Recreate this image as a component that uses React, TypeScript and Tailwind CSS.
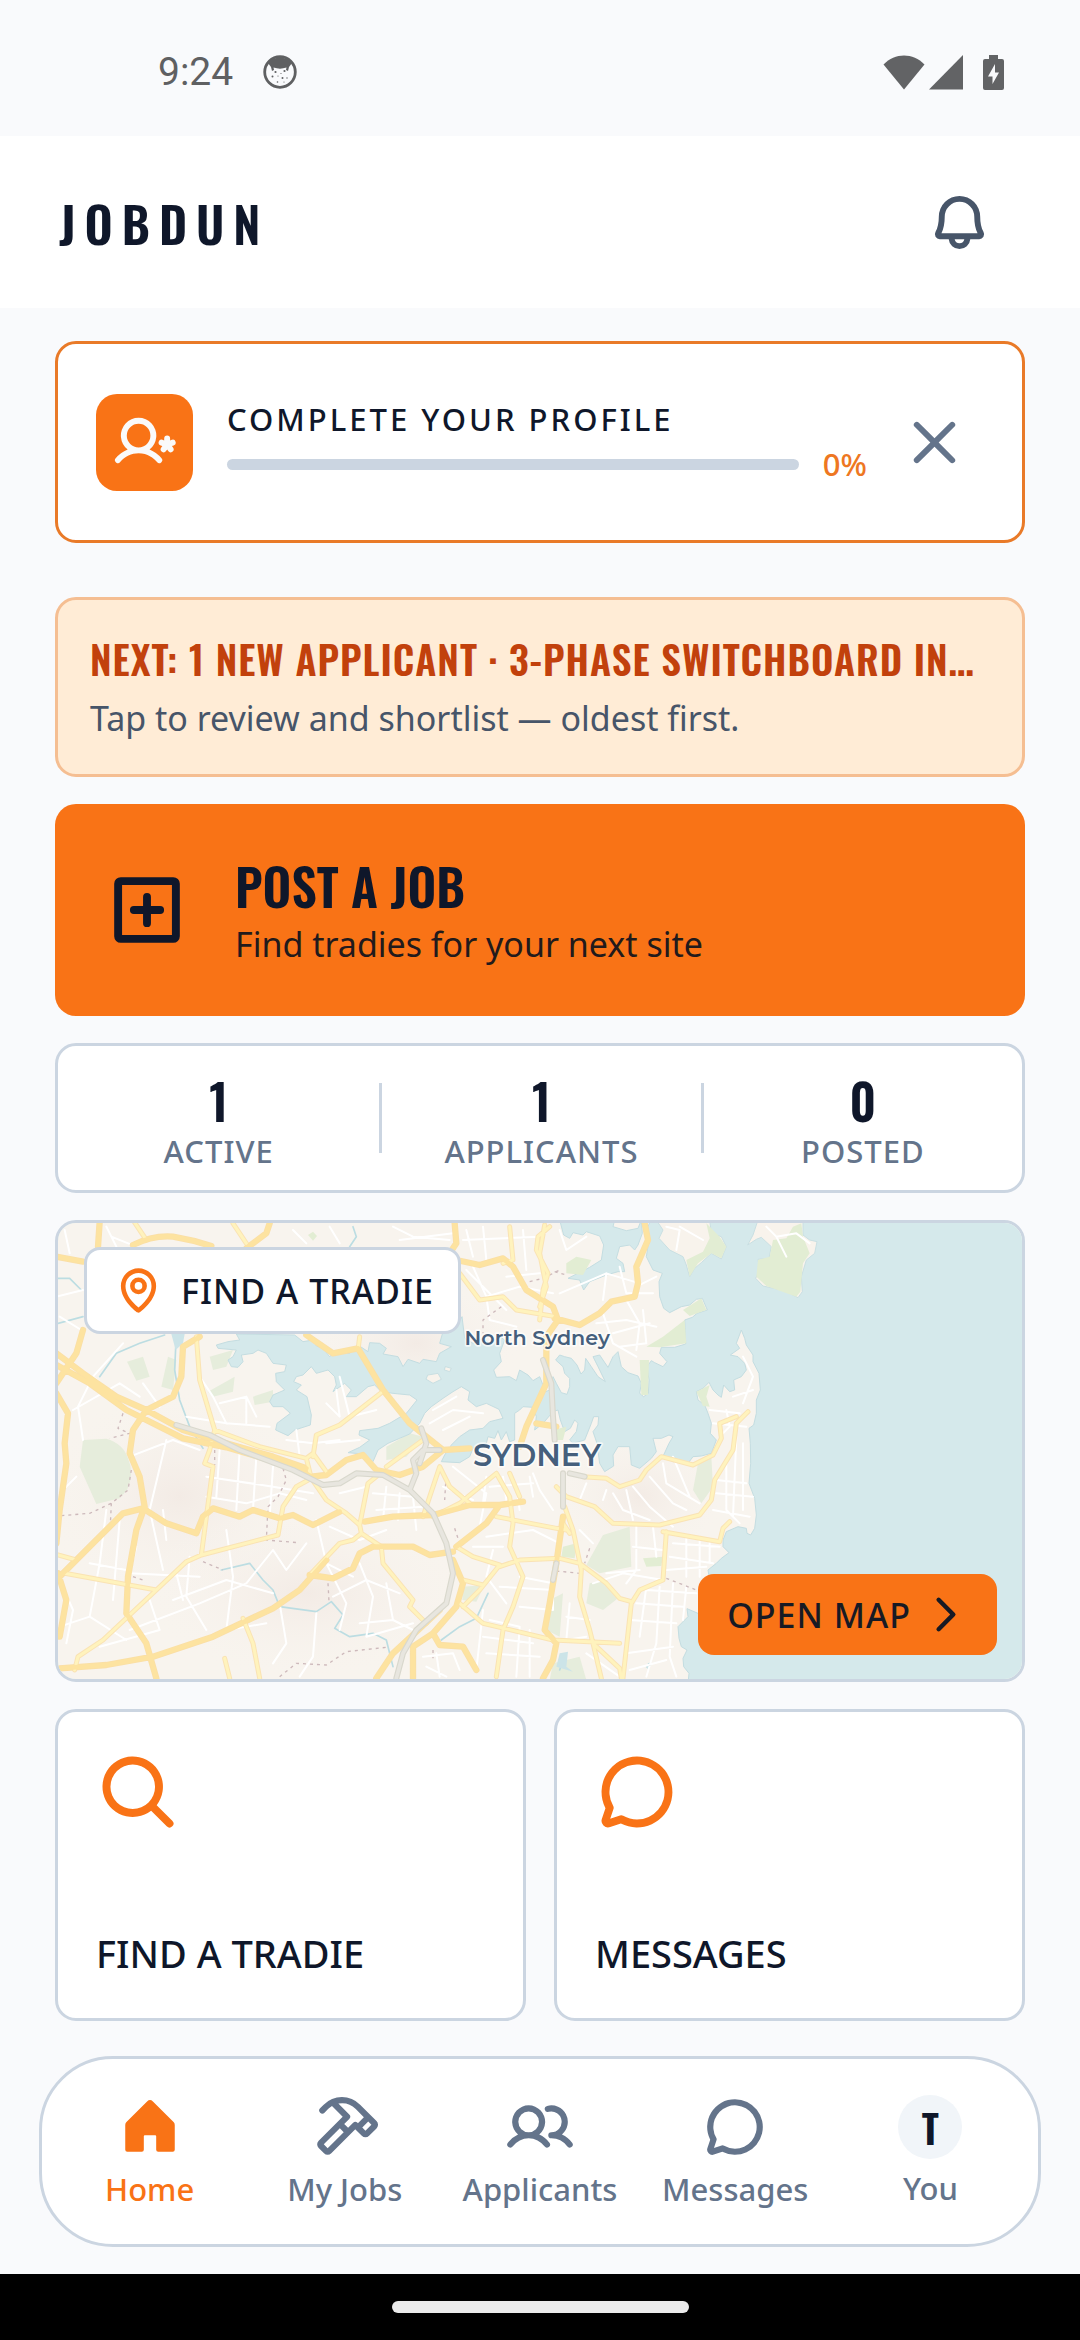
import type { ReactNode } from "react";
import {
  PiBellBold,
  PiCaretRightBold,
  PiChatCircleBold,
  PiHammerBold,
  PiHouseFill,
  PiMagnifyingGlassBold,
  PiMapPinBold,
  PiPlusSquareBold,
  PiUserGearBold,
  PiUsersBold,
  PiXBold,
} from "react-icons/pi";

const DISPLAY = "font-['Oswald','Roboto_Condensed','Liberation_Sans',sans-serif]";

function StatusBar() {
  return (
    <div className="flex h-[136px] items-center justify-between bg-[#f9fafc] pr-[76px] pl-[158px] pt-2 text-[#5f6062]">
      <div className="flex items-center gap-[30px]">
        <span className="font-['Roboto',sans-serif] text-[39px] leading-[48px]">9:24</span>
        <svg viewBox="0 0 34 34" className="size-[34px]" aria-hidden="true">
          <circle cx="17" cy="17" r="15.3" fill="none" stroke="currentColor" strokeWidth="2.8" />
          <path
            d="M5 8C10 1 24 1 29 8L26 12L25 16L23 15L23.500 12.500C19 14 15 14 10.500 12.500L11 15L9 16L8 12Z"
            fill="currentColor"
          />
          <g fill="currentColor">
            <circle cx="12.500" cy="17" r="1.100" />
            <circle cx="21.500" cy="16" r="1.100" />
            <circle cx="9.500" cy="21.500" r="1" />
            <circle cx="19.500" cy="23" r="1" />
            <circle cx="14.500" cy="27" r="0.800" />
            <circle cx="24" cy="23" r="0.700" />
            <circle cx="15" cy="21" r="0.600" />
            <circle cx="18" cy="18.500" r="0.600" />
            <circle cx="21" cy="27" r="0.600" />
          </g>
        </svg>
      </div>
      <div className="flex items-center text-[#626365]">
        <svg viewBox="0 0 42 35" className="h-[35px] w-[42px]" aria-hidden="true">
          <path d="M0.500 9.500C12 -2.500 30 -2.500 41.500 9.500L21 34.500Z" fill="currentColor" />
        </svg>
        <svg viewBox="0 0 34 35" className="ml-1 h-[35px] w-[34px]" aria-hidden="true">
          <path d="M34 0V34.500H0Z" fill="currentColor" />
        </svg>
        <svg viewBox="0 0 21 35" className="ml-5 h-[35px] w-[21px]" aria-hidden="true">
          <path
            fillRule="evenodd"
            d="M6 0H15V4H19Q21 4 21 6V33Q21 35 19 35H2Q0 35 0 33V6Q0 4 2 4H6ZM12 9L5 21.500H9.500V29L16 17.500H12Z"
            fill="currentColor"
          />
        </svg>
      </div>
    </div>
  );
}

function Header() {
  return (
    <header className="flex h-[172px] items-center justify-between bg-white pr-[89px] pl-[59px]">
      <h1 className={`${DISPLAY} pt-0.5 text-[49px] leading-[72px] font-semibold tracking-[9px] text-[#0f172a]`}>JOBDUN</h1>
      <button type="button" aria-label="Notifications" className="text-[#475569]">
        <PiBellBold className="size-[63px]" />
      </button>
    </header>
  );
}

function ProfileCard() {
  return (
    <section className="flex h-[202px] items-center rounded-[21px] border-[3px] border-[#e97a28] bg-white pr-14 pl-[38px]">
      <div className="flex size-[97px] shrink-0 items-center justify-center rounded-[21px] bg-[#f97316] text-[#fafafa]">
        <PiUserGearBold className="size-[63px]" />
      </div>
      <div className="ml-[34px] flex min-w-0 flex-1 flex-col pt-0.5">
        <span id="profile-label" className="text-[31px] leading-[42px] font-medium tracking-[3px] text-[#0f172a]">
          COMPLETE YOUR PROFILE
        </span>
        <div className="flex items-center gap-6">
          <div
            role="progressbar"
            aria-labelledby="profile-label"
            aria-valuenow={0}
            aria-valuemin={0}
            aria-valuemax={100}
            className="h-[11px] flex-1 rounded-full bg-[#cbd5e1]"
          />
          <span className="text-[31px] leading-[48px] font-medium text-[#ee7722]">0%</span>
        </div>
      </div>
      <button type="button" aria-label="Dismiss" className="ml-9 text-[#64748b]">
        <PiXBold className="size-[63px]" />
      </button>
    </section>
  );
}

function NextCard() {
  return (
    <button
      type="button"
      className="mt-[54px] flex h-[180px] flex-col justify-center rounded-[21px] border-[3px] border-[#f5be92] bg-[#ffecd6] px-8 text-left"
    >
      <span className={`${DISPLAY} whitespace-nowrap text-[39px] leading-[54px] font-semibold tracking-[1px] text-[#c2410c]`}>
        NEXT: 1 NEW APPLICANT · 3-PHASE SWITCHBOARD IN…
      </span>
      <span className="mt-2 text-[34px] leading-[50px] text-[#475569]">Tap to review and shortlist — oldest first.</span>
    </button>
  );
}

function PostJob() {
  return (
    <button
      type="button"
      className="mt-[27px] flex h-[212px] items-center gap-[46px] rounded-[21px] bg-[#f97316] px-[50px] text-left text-[#0f172a]"
    >
      <PiPlusSquareBold className="size-[84px]" />
      <span className="flex flex-col">
        <span className={`${DISPLAY} text-[50px] leading-[68px] font-semibold`}>POST A JOB</span>
        <span className="text-[34px] leading-[50px] text-[#221a1c]">Find tradies for your next site</span>
      </span>
    </button>
  );
}

const STATS = [
  { value: "1", label: "ACTIVE" },
  { value: "1", label: "APPLICANTS" },
  { value: "0", label: "POSTED" },
];

function Stats() {
  return (
    <section className="mt-[27px] flex h-[150px] items-center rounded-[21px] border-[3px] border-[#cbd5e1] bg-white">
      {STATS.map((s, i) => (
        <div key={s.label} className="flex flex-1 items-center">
          {i > 0 && <div className="h-[70px] w-[3px] bg-[#cbd5e1]" />}
          <div className="flex flex-1 flex-col items-center pt-2">
            <span className={`${DISPLAY} text-[49px] leading-[58px] font-semibold text-[#0f172a]`}>{s.value}</span>
            <span className="text-[31px] leading-[44px] font-medium tracking-[1px] text-[#64748b]">{s.label}</span>
          </div>
        </div>
      ))}
    </section>
  );
}

const PARKS = [
  "M130 690L200 686Q250 700 265 745Q285 790 262 840L240 865L170 882L120 770Z",
  "M262 455L310 440L330 500L290 512Z",
  "M505 545L585 500L580 545L520 560Z",
  "M510 440L580 420L560 470L520 480Z",
  "M385 440L410 450L400 540L365 530Z",
  "M640 560L700 540L700 575L645 585Z",
  "M1040 710L1110 670L1150 680L1100 740L1040 750Z",
  "M1270 1130L1335 1125L1310 1175L1268 1170Z",
  "M1690 975L1770 950L1775 1070L1680 1090L1640 1065Z",
  "M1650 1120L1700 1110L1735 1165L1690 1200L1640 1180Z",
  "M1975 760L2015 740L2020 830L1985 880L1960 840Z",
  "M1530 1170L1570 1150L1560 1280L1520 1260Z",
  "M1540 1360L1620 1340L1640 1410L1530 1410Z",
  "M2000 40L2040 80L2060 110L2045 145L2015 130L1975 160L1950 200L1940 150L1990 125L2010 85Z",
  "M2200 90L2240 85L2260 50L2285 40L2290 80L2310 130L2290 160L2282 245L2270 260L2180 228L2150 200L2155 150L2190 140Z",
  "M1820 410L1870 380L1935 330L1940 400L1860 412Z",
  "M1930 300L1985 265L2000 300L1950 318Z",
  "M1800 450L1828 450L1825 555L1805 555Z",
  "M1970 545L2010 525L2000 560L2010 590L1990 588Z",
  "M1580 160L1610 140L1655 150L1630 195L1580 190Z",
  "M1540 660L1580 650L1570 690L1550 690Z",
  "M1570 1010L1610 1000L1605 1045L1565 1040Z",
  "M1810 1045L1870 1040L1865 1068L1820 1070Z",
  "M805 75L820 65L832 78L820 92Z",
];

const STREETS = [
  "M50 260L130 240M75 60L90 130M200 50L230 110M215 80L290 110M60 320L125 360",
  "M100 600L240 520L300 560M130 690L115 590L160 500L250 400M160 500L230 560M310 520L360 590",
  "M270 740L400 690L480 720M380 690L330 900L370 1080M200 900L180 1060L150 1220L60 1250M240 930L220 1170M150 1060L260 1080",
  "M150 1220L260 1290M330 1170L360 1260L180 1310M450 1040L440 1160L500 1260M400 1170L560 1110L700 1150M270 1260L480 1180L620 1120",
  "M560 960L580 1100L560 1260L680 1240M500 860L620 880L720 850L800 870M540 720L530 860M600 720L590 900M650 740L640 900M700 770L690 920",
  "M500 800L700 830L820 850M540 580L620 560L620 640M480 500L520 560L560 640M440 620L560 640L690 650M620 560L650 620",
  "M740 690L820 700L900 690M770 660L780 740M860 580L900 620L890 540M860 700L960 690M900 500L930 620L1010 600",
  "M720 1180L740 1300L700 1360M830 1210L820 1340L780 1400M620 1120L700 1020L740 1080L800 1000M860 1060L920 1180L900 1260",
  "M880 1160L980 1110L1080 1150M960 1060L1000 1160L980 1280L1120 1240M830 930L860 1060L940 1100M870 950L960 990L1040 960",
  "M1000 850L1120 860L1130 960M900 850L980 830M1040 830L1030 930M1080 850L1075 930M1010 900L1150 890",
  "M1170 640L1240 600L1330 610M1180 600L1250 560M1210 660L1290 620M1210 830L1300 870M1240 770L1340 850L1320 950",
  "M1060 50L1120 80L1230 90M760 60L800 100M870 50L900 100M1080 90L1240 70M1280 60L1300 140M1330 50L1340 150M1270 90L1500 80",
  "M1300 170L1340 260L1440 230L1540 250M1400 200L1500 190M1450 60L1460 180M1280 180L1400 300M1340 260L1350 330L1430 350",
  "M1560 60L1580 120L1640 80M1560 250L1700 190L1800 220M1700 190L1690 270M1740 170L1760 250L1840 250M1670 340L1760 330L1850 350",
  "M1690 310L1720 400L1790 440M1760 270L1800 340L1790 420M1850 200L1790 230M1720 370L1830 340M1810 300L1820 400L1740 410",
  "M1880 50L1920 60L1910 120M1920 50L1990 90M2180 50L2210 80L2270 70L2310 100M2210 80L2240 140",
  "M2110 440L2140 500L2110 580M2080 560L2140 540M2060 600L2070 650L2040 680M2010 600L2100 610M2020 640L2120 650",
  "M2060 760L2060 900L2100 940M2090 680L2080 920M2110 700L2110 900M2030 850L2140 860M2030 810L2120 820M2020 900L2130 920",
  "M1720 850L1750 900L1830 930M1780 830L1830 890L1900 950M1830 800L1900 880L1940 900M1870 760L1880 820L1980 880M1900 740L1950 860",
  "M1700 840L1690 870M1760 840L1780 930M1640 820L1620 870M1790 950L1790 1080L1760 1120M1840 950L1850 1040M1780 1010L1870 1020",
  "M1900 1000L2040 1010M1890 1040L2020 1060M1880 1080L2000 1070M1940 980L1940 1100M1980 980L1980 1100M2010 990L2010 1060",
  "M1660 1120L1750 1090L1870 1110M1700 1090L1800 1080M1820 1140L1970 1150M1790 1180L1930 1190M1770 1230L1910 1240M1820 1130L1800 1280",
  "M1860 1130L1850 1300L1820 1400M1900 1120L1890 1340L1910 1400M1940 1130L1930 1230M1580 1220L1650 1230M1590 1180L1580 1290L1640 1280",
  "M1760 1330L1900 1310M1770 1380L1880 1350M1640 1330L1740 1400M1660 1000L1620 960M1540 900L1500 840L1480 790",
  "M1340 980L1480 960L1560 1000M1360 1020L1340 1100L1400 1180M1300 1010L1390 1010M1440 1100L1540 1120L1540 1200L1440 1190",
  "M1330 1200L1310 1380M1350 1230L1440 1250L1430 1400M1470 1260L1470 1400M1340 1330L1500 1340M1380 1130L1540 1140M1330 1280L1480 1300",
  "M1150 1340L1240 1330L1260 1380M1160 1370L1220 1400M1190 1330L1200 1400M1120 1260L1060 1230L1040 1120M1060 1230L960 1240",
  "M1340 800L1330 880M1390 800L1400 870M1430 830L1440 900M1470 800L1480 860M1350 830L1480 820",
  "M60 1110L100 1200L80 1300M60 850L110 800M290 1010L270 1090L480 1100M370 900L380 990M410 1090L430 1170",
];

const MINOR_ROADS = [
  "M280 30L320 90M580 40L620 100M470 380L480 510L525 660L510 720L495 760L520 770L485 1035",
  "M55 1035L110 1050M75 1090L350 1140L440 1055L485 1035L715 975L730 890L770 830L815 805",
  "M350 1140L270 1215L190 1290L115 1340L105 1380M610 1225L640 1300L660 1405M555 1345L570 1405",
  "M525 660L660 710L800 745L820 730L860 785M820 740L830 675L900 645L1025 548M800 745L815 805L860 870L920 910L960 945",
  "M960 945L975 870L985 820L1010 800M960 945L965 970L1025 1010L1030 1060L1120 1170L1110 1190L1160 1240M965 970L940 990L900 1000L810 1095",
  "M1150 920L1200 770L1230 830L1290 880M1180 920L1260 880L1370 790M960 380L955 420M1260 190L1320 270L1390 260L1430 300L1550 320",
  "M1040 770L1150 690M1250 1010L1300 1040L1380 1065L1320 1140L1270 1190M1270 1110L1330 1125M1260 1180L1330 1240L1540 1290L1740 1300",
  "M1390 1260L1370 1400M1370 920L1550 955L1580 960M1380 1070L1440 1050L1560 1045L1620 1060L1700 1120L1740 1165L1775 1175",
  "M1410 50L1420 150L1390 160M1530 50L1495 80L1490 120L1525 190L1510 240L1500 330M1370 790L1410 860L1420 940L1410 1010L1450 1100L1420 1190L1390 1260",
  "M1410 790L1440 860M1550 830L1580 860L1665 890L1720 940L1860 945L1980 915L2015 870L2025 810L2080 720L2090 640L2125 605",
  "M1630 800L1700 805L1740 830L1800 810L1820 780L1865 740L1960 765L2020 735L2045 685L2040 640L2090 620",
  "M1870 965L2040 995L2050 955L2070 935M1880 965L1870 1110L1800 1140L1775 1180L1750 1405",
  "M1575 890L1600 960L1625 1080L1620 1160L1650 1260L1660 1300L1685 1405M1660 1300L1740 1375L1745 1405M1590 970L1570 940",
  "M1515 45L1500 130L1520 230L1500 290",
];

const MAJOR_ROADS = [
  "M50 140L130 155M180 35L175 110M280 105Q340 75 400 80Q460 90 515 108M690 40L680 70L620 115",
  "M50 430L130 490L230 560L320 600L430 660L560 700L700 740L800 775M50 465L150 520L260 600L430 685L560 712L760 770L815 800",
  "M480 380L430 410L425 500L400 560L320 600L280 660L270 730L300 800L315 890L290 960L265 1100L260 1210L320 1300L350 1405",
  "M130 360L110 430L50 520M50 550L85 610L75 700L80 760L60 900L50 1000M60 1100L160 1000L250 910L310 895L380 940L470 970L490 920L520 895L600 920L640 900L720 925L760 915L820 945L900 905",
  "M60 1375L200 1365L340 1340L520 1280L700 1195L780 1140L860 1050M55 1090L80 1170L60 1280",
  "M800 375L880 430L955 415L1030 540L1110 640L1210 720L1290 715M815 800L860 795L920 750L970 735L1010 780L1080 795L1150 770L1210 720",
  "M975 935L1060 920L1180 915L1290 885L1380 885L1450 875M1380 885L1340 940L1250 1010M810 1095L880 1105L940 1075L960 1030L1000 1010L1120 1010L1170 1035L1240 1025",
  "M1245 40L1250 100L1230 130M1250 150L1320 165L1390 145L1420 170L1460 240L1540 290L1555 330L1520 380L1520 520L1460 650L1440 710",
  "M1545 325L1620 345L1680 310L1715 275L1785 260L1795 220L1790 170L1825 90L1815 40",
  "M1240 1050L1270 1120L1250 1190L1180 1270L1120 1310L1120 1405M1180 1270L1200 1305L1270 1310L1310 1380M1200 1200L1060 1330L1010 1405",
  "M1570 920L1550 1060L1530 1180L1515 1260L1550 1300L1540 1350L1510 1405M1490 640L1550 650",
];

const MOTORWAYS = [
  "M410 645L510 675L600 720L760 780L850 825L900 820L950 790L1030 795L1110 840L1180 910L1220 1000L1240 1090L1220 1180L1130 1260L1090 1330L1070 1405",
  "M1110 840L1130 790L1120 750L1150 720L1200 720M1145 655L1160 700L1140 760M1510 450L1535 520L1540 620L1545 690M1570 790L1570 890M1590 790L1635 800M1550 1060L1540 1110",
];

function HarbourMap() {
  return (
    <svg
      viewBox="55 39 2892 1368"
      preserveAspectRatio="xMidYMid slice"
      className="h-full w-full"
      role="img"
      aria-label="Map of Sydney"
      fill="none"
      strokeLinecap="round"
      strokeLinejoin="round"
    >
      <defs>
        <radialGradient id="suburbs">
          <stop offset="0" stopColor="#f3ebe5" />
          <stop offset="1" stopColor="#f8f4ef" stopOpacity="0" />
        </radialGradient>
      </defs>
      <rect x="40" y="30" width="2920" height="1390" fill="#f8f4ee" />
      <ellipse cx="420" cy="860" rx="420" ry="330" fill="url(#suburbs)" />
      <ellipse cx="800" cy="1150" rx="500" ry="260" fill="url(#suburbs)" />
      <ellipse cx="1130" cy="400" rx="320" ry="200" fill="url(#suburbs)" />
      <ellipse cx="1800" cy="860" rx="260" ry="200" fill="url(#suburbs)" />
      <g fill="#e6eddc">
        {PARKS.slice(0, 13).map((d) => (
          <path key={d} d={d} />
        ))}
      </g>

      {/* Harbour and ocean */}
      <g fill="#d5e9eb" stroke="#c4dde1" strokeWidth="3">
        <path d="M3000 0H1845L1825 50L1828 90L1820 140L1840 180L1868 190L1858 215L1860 260L1872 295L1890 308L1925 290L1950 285L1970 268L1988 265L2003 300L1972 310L1958 322L1935 330L1938 402L1905 412L1865 412L1860 430L1882 455L1870 470L1845 458L1835 452L1822 470L1828 510L1826 550L1812 560L1800 550L1805 520L1795 498L1765 488L1745 470L1735 425L1720 440L1705 472L1690 450L1680 435L1660 440L1675 470L1697 515L1675 500L1655 470L1638 445L1635 480L1624 492L1612 465L1595 445L1575 440L1560 435L1548 450L1570 470L1575 490L1590 505L1590 530L1582 553L1565 548L1550 520L1540 500L1530 540L1518 545L1500 500L1480 512L1465 495L1440 480L1430 512L1410 500L1370 502L1362 480L1385 455L1380 430L1395 390L1380 380L1350 400L1330 385L1300 400L1275 385L1267 320L1250 350L1210 365L1200 400L1235 410L1200 430L1190 455L1150 448L1140 460L1105 448L1090 470L1075 440L1030 432L1040 415L1020 400L990 398L985 425L955 405L930 430L885 425L870 440L850 415L830 408L820 390L790 395L765 375L590 372L600 390L565 395L530 405L535 415L590 420L580 440L565 450L575 470L595 472L610 455L605 435L640 430L655 420L680 430L700 460L740 465L735 485L708 490L710 515L735 540L700 555L690 575L700 590L730 590L752 610L712 640L708 660L745 677L765 660L812 645L815 615L802 560L770 540L785 525L762 515L770 500L790 495L815 470L830 490L865 480L885 500L890 525L880 545L915 520L935 540L920 560L950 560L985 530L1005 525L1025 545L1060 550L1110 555L1132 570L1100 610L1050 640L1015 655L960 662L958 675L990 690L960 712L925 728L970 732L1000 755L1015 720L1045 700L1080 685L1110 672L1140 640L1155 610L1175 590L1210 565L1240 545L1265 530L1290 545L1285 570L1310 590L1340 580L1378 598L1390 625L1350 635L1330 655L1290 660L1260 680L1235 705L1215 735L1205 755L1260 758L1290 740L1300 715L1340 700L1345 680L1365 685L1375 662L1385 690L1400 665L1410 695L1425 690L1425 610L1440 600L1450 590L1480 592L1490 620L1485 660L1510 640L1540 605L1555 600L1562 630L1575 665L1592 655L1605 630L1615 640L1610 665L1590 690L1600 700L1635 690L1655 640L1662 620L1677 620L1675 645L1660 665L1672 700L1680 760L1695 785L1722 768L1720 735L1735 710L1770 710L1775 765L1800 775L1835 745L1850 725L1840 685L1865 685L1888 675L1900 680L1888 700L1872 735L1900 755L1945 760L1960 740L1985 738L2015 730L2030 690L2012 670L2015 640L2005 610L1995 585L1975 570L1970 545L1990 535L2008 517L2020 540L2035 555L2045 562L2052 525L2070 545L2085 540L2082 510L2105 500L2120 480L2115 460L2095 440L2072 435L2100 415L2090 400L2105 360L2115 385L2120 405L2140 435L2140 455L2158 490L2162 540L2150 570L2150 610L2142 645L2128 655L2132 700L2133 760L2128 820L2145 865L2150 915L2145 955L2133 975L2122 970L2120 955L2095 950L2060 965L2050 990L2050 1010L2068 1028L2045 1045L2030 1060L2005 1080L2010 1110L2000 1180L1975 1210L1942 1196L1945 1220L1915 1250L1918 1285L1925 1310L1942 1320L1930 1345L1932 1370L1948 1390L1945 1420H3000Z" />
        <path d="M1560 30L1572 75L1590 85L1600 68L1630 75L1640 65L1680 78L1692 105L1685 150L1650 172L1585 205L1620 210L1632 240L1650 215L1700 195L1735 185L1755 185L1750 160L1730 145L1740 110L1770 105L1785 120L1795 105L1808 70L1805 30L1795 55L1760 62L1720 50L1725 30Z" />
      </g>
      <g fill="#f8f3ec" stroke="#c9dfe2" strokeWidth="3">
        <path d="M1850 30L1870 60L1858 85L1890 120L1930 140L1940 165L1950 200L1965 175L1985 158L2015 130L2045 147L2060 110L2045 80L2015 70L2010 30Z" />
        <path d="M2155 30L2140 75L2124 105L2150 88L2165 82L2195 110L2188 145L2155 148L2160 180L2148 205L2170 228L2235 242L2275 263L2288 245L2285 200L2300 150L2325 130L2332 95L2310 90L2290 75L2290 30Z" />
        <path d="M1165 495L1195 490L1205 508L1180 520L1160 508Z" />
        <path d="M1218 470L1235 475L1230 485L1215 480Z" />
      </g>
      <g fill="#e2edd3">
        {PARKS.slice(13).map((d) => (
          <path key={d} d={d} />
        ))}
      </g>

      {/* Creeks */}
      <g stroke="#bcdde2" strokeWidth="5">
        <path d="M50 205L90 205L125 240M55 340L130 320M940 50L950 80L930 110M375 375L300 400L230 430L180 500M410 370L405 480L420 570L450 650L490 715" />
        <path d="M545 1080L630 1060L670 1110L700 1140L720 1190L830 1205L875 1175L910 1215L885 1255L930 1280L1000 1270L1040 1290L1060 1370" />
        <path d="M1345 1150L1310 1225L1260 1250L1205 1290M1570 1350L1560 1380" />
      </g>
      <path d="M395 372L435 372L430 400L408 420ZM1825 1360L1835 1355L1828 1380L1818 1372ZM1560 1330L1585 1325L1580 1370L1600 1385L1550 1370Z" fill="#cce4e8" />

      {/* Streets */}
      <path d={STREETS.join("")} stroke="#ffffff" strokeWidth="6" />

      {/* Suburb boundaries */}
      <g stroke="#cdb9bb" strokeWidth="4" strokeDasharray="9 12" strokeLinecap="butt">
        <path d="M65 917L150 910L215 880L265 840L275 780M215 880L212 945M250 610L235 655L270 670L210 685M525 720L525 765M730 775L740 810L715 860L685 890L680 990L775 998" />
        <path d="M490 1055L550 1080M865 1120L868 1175M720 1400L770 1360L860 1365L920 1325L1040 1312M1470 215L1510 205L1560 180M1385 290L1330 330L1330 370M1218 820L1215 870" />
        <path d="M1245 955L1260 1000M1650 1015L1635 1060M1550 1083L1620 1090M1880 1105L1970 1140M1545 185L1580 195M280 1100L310 1110M1180 1320L1180 1345" />
      </g>

      {/* Roads, each drawn over a slightly wider casing */}
      <path d={MINOR_ROADS.join("")} stroke="#fae3b4" strokeWidth="15" />
      <path d={MAJOR_ROADS.join("")} stroke="#fadfa6" strokeWidth="19" />
      <path d={MINOR_ROADS.join("")} stroke="#fff3bd" strokeWidth="9" />
      <path d={MAJOR_ROADS.join("")} stroke="#fde3a0" strokeWidth="14" />
      <path d={MOTORWAYS.join("")} stroke="#d9d8cd" strokeWidth="18" />
      <path d={MOTORWAYS.join("")} stroke="#e8e6df" strokeWidth="11" />

      <g
        fill="#455f7c"
        stroke="#ffffff"
        strokeOpacity="0.7"
        strokeWidth="10"
        paintOrder="stroke"
        textAnchor="middle"
        className="font-['Montserrat','Open_Sans',sans-serif] font-semibold"
      >
        <text x="1493" y="405" fontSize="62">North Sydney</text>
        <text x="1492" y="769" fontSize="91">SYDNEY</text>
      </g>
    </svg>
  );
}

function MapCard() {
  return (
    <section className="relative mt-[27px] h-[462px] overflow-hidden rounded-[21px] border-[3px] border-[#cbd5e1] bg-[#d5e9eb]">
      <HarbourMap />
      <div className="absolute top-6 left-[26px] flex h-[87px] items-center gap-[18px] rounded-[16px] border-[3px] border-[#cbd5e1] bg-white pr-6 pl-[27px]">
        <PiMapPinBold className="size-[49px] text-[#f97316]" />
        <span className="text-[34px] leading-[46px] font-medium tracking-[1px] text-[#0f172a]">FIND A TRADIE</span>
      </div>
      <button
        type="button"
        className="absolute right-[25px] bottom-6 flex h-[81px] items-center gap-[10px] rounded-[16px] bg-[#f97316] px-[29px] text-[#171a24]"
      >
        <span className="text-[34px] leading-[46px] font-medium tracking-[1px]">OPEN MAP</span>
        <PiCaretRightBold className="size-[47px]" />
      </button>
    </section>
  );
}

function Tile({ icon, label }: { icon: ReactNode; label: string }) {
  return (
    <button
      type="button"
      className="flex h-[312px] flex-col items-start justify-between rounded-[21px] border-[3px] border-[#cbd5e1] bg-white px-[38px] pt-[38px] pb-10 text-left"
    >
      <span className="text-[#f97316]">{icon}</span>
      <span className="text-[38px] leading-[50px] font-medium text-[#0f172a]">{label}</span>
    </button>
  );
}

const NAV = [
  { label: "Home", icon: <PiHouseFill className="size-[66px]" />, active: true },
  { label: "My Jobs", icon: <PiHammerBold className="size-[66px]" /> },
  { label: "Applicants", icon: <PiUsersBold className="size-[66px]" /> },
  { label: "Messages", icon: <PiChatCircleBold className="size-[66px]" /> },
  {
    label: "You",
    icon: (
      <span
        className={`${DISPLAY} flex size-16 items-center justify-center rounded-full bg-[#f1f5f9] text-[39px] leading-[58px] font-semibold text-[#0f172a]`}
      >
        T
      </span>
    ),
  },
];

function BottomNav() {
  return (
    <nav className="mx-[39px] mt-[35px] mb-[27px] grid h-[191px] grid-cols-5 items-center rounded-[74px] border-[3px] border-[#cbd5e1] bg-white px-[10px]">
      {NAV.map((n) => (
        <a
          key={n.label}
          href="#"
          aria-current={n.active ? "page" : undefined}
          className={`flex flex-col items-center gap-2 ${n.active ? "text-[#f97316]" : "text-[#64748b]"}`}
        >
          {n.icon}
          <span className="text-[31px] leading-[42px] font-medium">{n.label}</span>
        </a>
      ))}
    </nav>
  );
}

export default function App() {
  return (
    <div className="flex min-h-screen flex-col bg-[#f9fafc] font-['Noto_Sans','Open_Sans',sans-serif]">
      <StatusBar />
      <Header />
      <main className="flex flex-col px-[55px] pt-[33px]">
        <ProfileCard />
        <NextCard />
        <PostJob />
        <Stats />
        <MapCard />
        <div className="mt-[27px] grid grid-cols-2 gap-7">
          <Tile icon={<PiMagnifyingGlassBold className="size-[84px]" />} label="FIND A TRADIE" />
          <Tile icon={<PiChatCircleBold className="size-[84px]" />} label="MESSAGES" />
        </div>
      </main>
      <BottomNav />
      <footer className="mt-auto flex h-[66px] items-center justify-center bg-black">
        <div className="h-3 w-[297px] rounded-full bg-[#ebebeb]" />
      </footer>
    </div>
  );
}
